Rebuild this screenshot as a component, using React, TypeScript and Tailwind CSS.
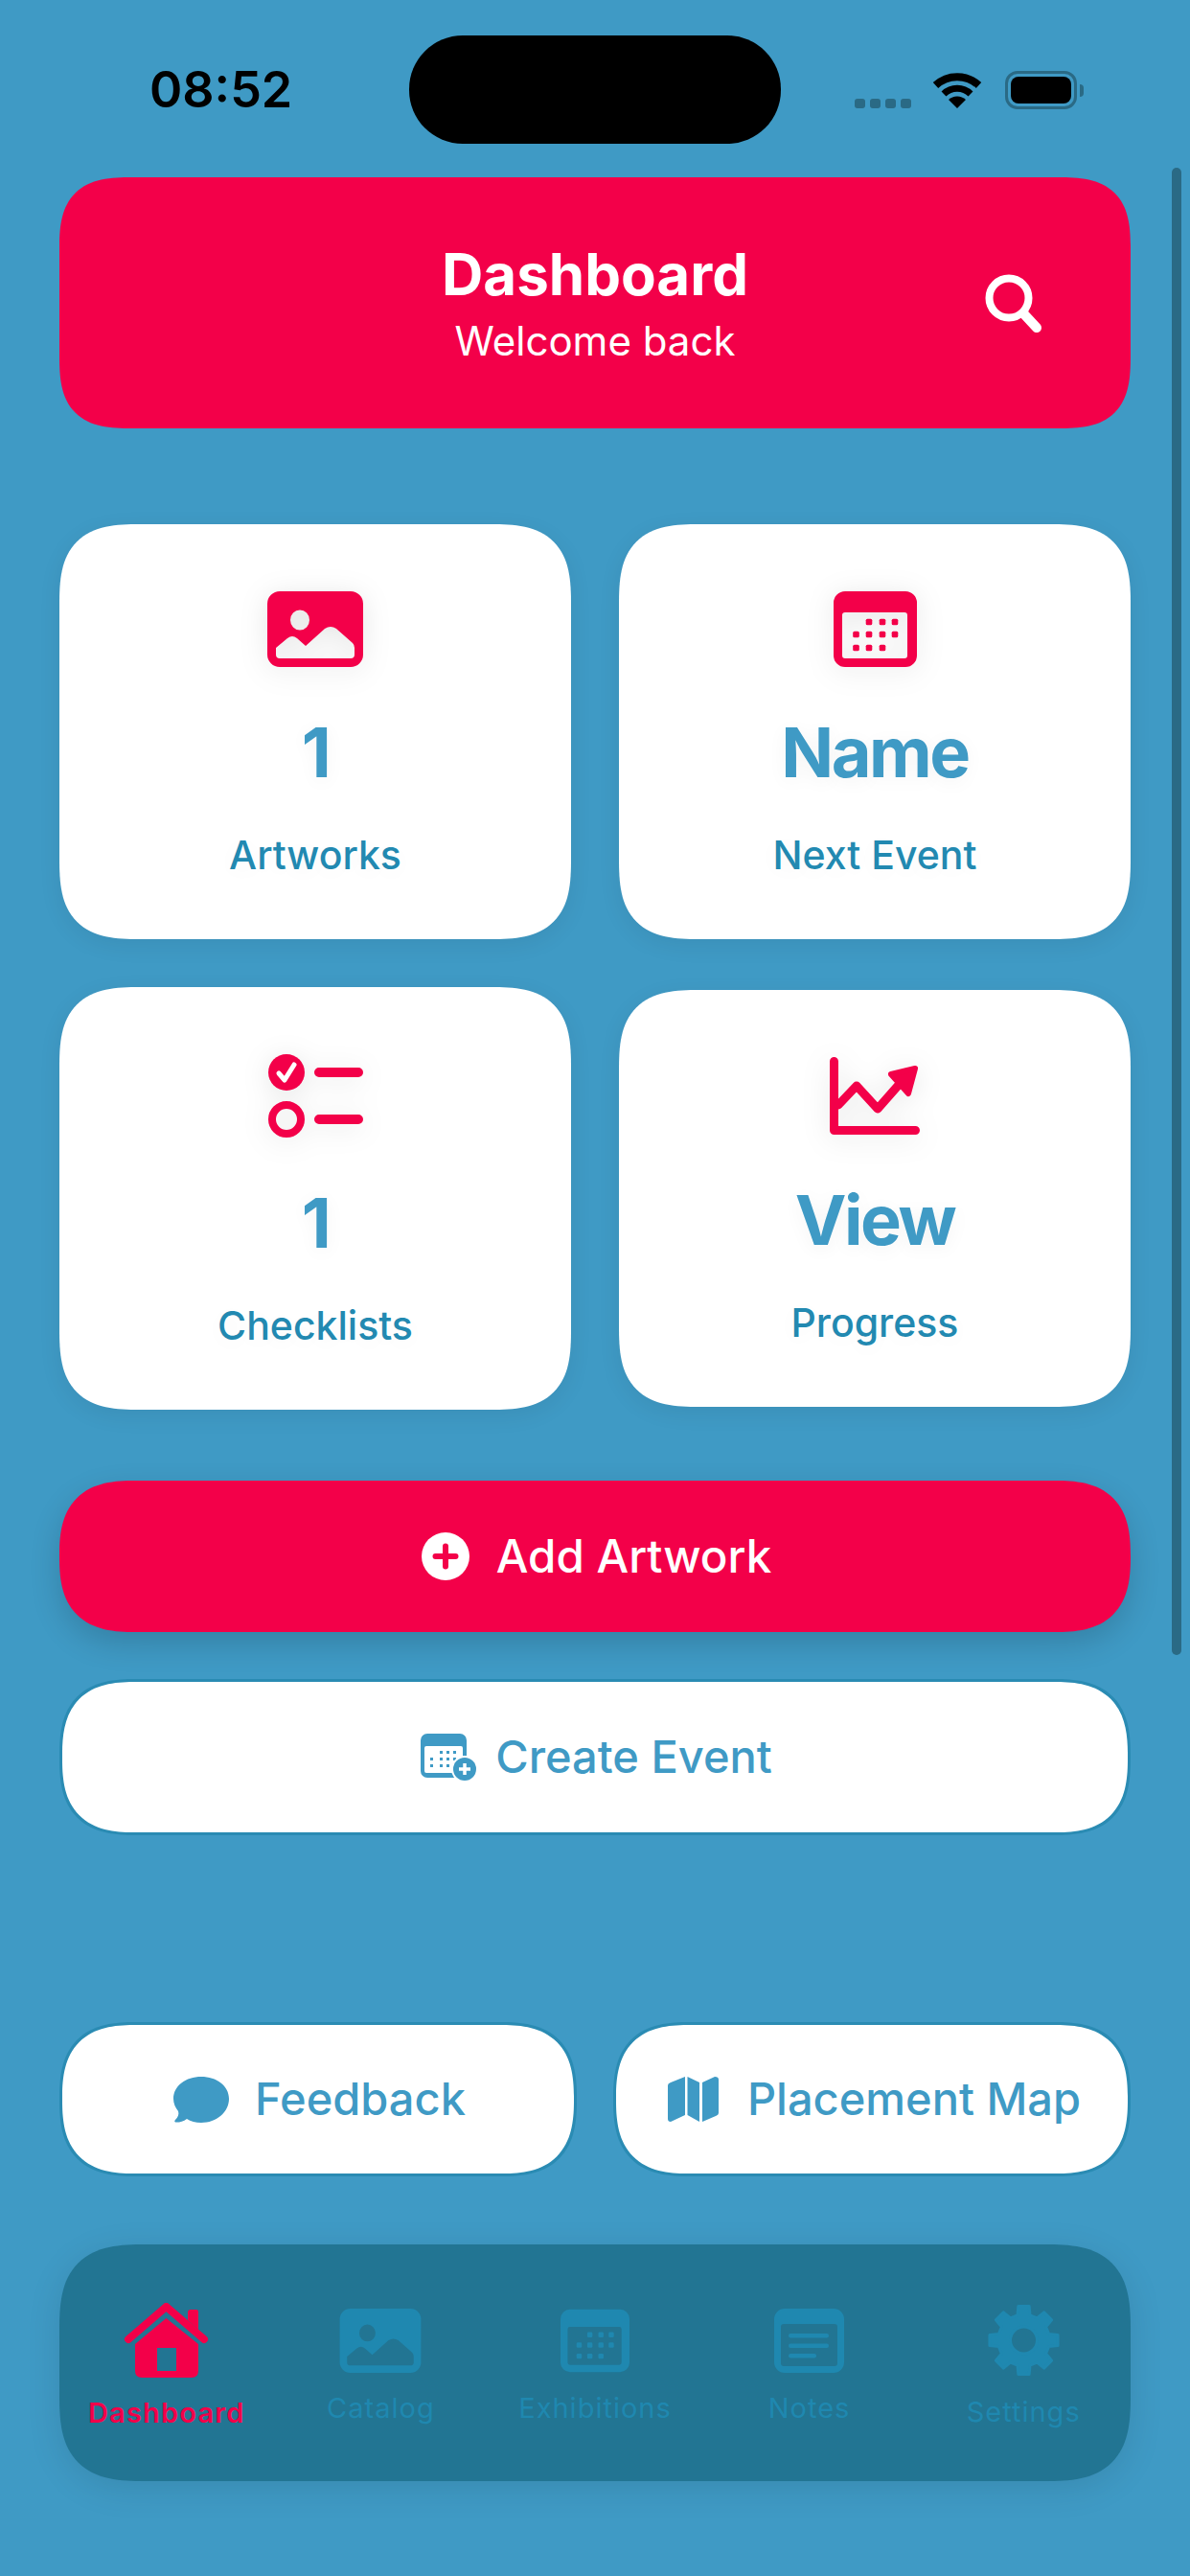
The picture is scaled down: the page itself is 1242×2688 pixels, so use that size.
import type { ReactNode } from "react";

const RoundRect = "M13 0H87A13 13 0 0 1 100 13V66A13 13 0 0 1 87 79H13A13 13 0 0 1 0 66V13A13 13 0 0 1 13 0Z";

function ImageIcon({ className }: { className: string }) {
  return (
    <svg viewBox="0 0 100 79" className={className} fill="currentColor">
      <path
        fillRule="evenodd"
        d={
          RoundRect +
          "M34 19.5a10 10.5 0 1 0 0 21a10 10.5 0 1 0 0 -21Z" +
          "M9 59L21 49Q26 45 31 49L40 57L60 39Q66 35 72 39L89 54Q91 56 91 59V66Q91 70 87 70H13Q9 70 9 66Z"
        }
      />
    </svg>
  );
}

function CalendarIcon({ className }: { className: string }) {
  const dots = [
    [37, 32], [51, 32], [64, 32],
    [23.5, 45], [37, 45], [51, 45], [64, 45],
    [23.5, 59], [37, 59], [51, 59],
  ];
  return (
    <svg viewBox="0 0 87 79" className={className} fill="currentColor">
      <path
        fillRule="evenodd"
        d="M12 0H75A12 12 0 0 1 87 12V67A12 12 0 0 1 75 79H12A12 12 0 0 1 0 67V12A12 12 0 0 1 12 0ZM12 22Q9 22 9 25V67Q9 70 12 70H74Q77 70 77 67V25Q77 22 74 22Z"
      />
      {dots.map(([x, y]) => (
        <rect key={`${x}-${y}`} x={x - 3.3} y={y - 3.3} width="6.6" height="6.6" rx="1.6" />
      ))}
    </svg>
  );
}

function ChecklistIcon({ className }: { className: string }) {
  return (
    <svg viewBox="0 0 99 87" className={className} fill="none">
      <circle cx="19" cy="19" r="19" fill="currentColor" />
      <path d="M11 20L17 27L27 11" stroke="#fff" strokeWidth="5" strokeLinecap="round" strokeLinejoin="round" />
      <circle cx="19" cy="68" r="15" stroke="currentColor" strokeWidth="8" />
      <path d="M53 19H94M53 68H94" stroke="currentColor" strokeWidth="10" strokeLinecap="round" />
    </svg>
  );
}

function ChartIcon({ className }: { className: string }) {
  return (
    <svg viewBox="0 0 94 81" className={className} fill="none" stroke="currentColor" strokeLinecap="round" strokeLinejoin="round">
      <path d="M4.5 4.5V76.5H89.5" strokeWidth="9" />
      <path d="M9 50L28 30L50 54L72 29" strokeWidth="9" />
      <path d="M89 12L64 18L82 38Z" fill="currentColor" strokeWidth="6" />
    </svg>
  );
}

function HouseIcon({ className }: { className: string }) {
  return (
    <svg viewBox="0 0 89 78" className={className} fill="currentColor">
      <path d="M5 38L44.5 4L84 38" fill="none" stroke="currentColor" strokeWidth="8" strokeLinecap="round" strokeLinejoin="round" />
      <path d="M67 10Q67 7 70 7H76Q78 7 78 10V28L67 18Z" />
      <path
        fillRule="evenodd"
        d="M44.5 16L78 43V71Q78 78 71 78H19Q12 78 12 71V43ZM35 47V71H55V47Z"
      />
    </svg>
  );
}

function NotesIcon({ className }: { className: string }) {
  return (
    <svg viewBox="0 0 73 67" className={className} fill="currentColor">
      <path
        fillRule="evenodd"
        d="M11 0H62A11 11 0 0 1 73 11V56A11 11 0 0 1 62 67H11A11 11 0 0 1 0 56V11A11 11 0 0 1 11 0ZM10 16Q7 16 7 19V57Q7 60 10 60H63Q66 60 66 57V19Q66 16 63 16Z"
      />
      <rect x="15" y="26" width="42" height="4.5" rx="2.2" />
      <rect x="15" y="36.5" width="42" height="4.5" rx="2.2" />
      <rect x="15" y="47" width="29" height="4.5" rx="2.2" />
    </svg>
  );
}

function gearPath() {
  const pt = (deg: number, r: number) => {
    const a = (deg * Math.PI) / 180;
    return `${(38.5 + r * Math.cos(a)).toFixed(2)} ${(38 + r * Math.sin(a)).toFixed(2)}`;
  };
  let d = "";
  for (let k = 0; k < 8; k++) {
    const a = k * 45 + 0;
    d += `${k === 0 ? "M" : "L"}${pt(a - 14, 27)}L${pt(a - 9, 36)}L${pt(a + 9, 36)}L${pt(a + 14, 27)}`;
  }
  return d + "ZM38.5 24a14 14 0 1 0 0 28a14 14 0 1 0 0 -28Z";
}

function GearIcon({ className }: { className: string }) {
  return (
    <svg viewBox="0 0 77 76" className={className}>
      <path d={gearPath()} fill="currentColor" stroke="currentColor" strokeWidth="3" strokeLinejoin="round" fillRule="evenodd" />
    </svg>
  );
}

function StatCard({ icon, value, label }: { icon: ReactNode; value: string; label: string }) {
  return (
    <div className="flex flex-col items-center rounded-[84px] bg-white pt-[70px] pb-[63px] shadow-[0_6px_24px_rgba(0,0,0,0.07)] [corner-shape:superellipse(1.5)]">
      {icon}
      <div className="mt-[44px] text-[72px] leading-[90px] font-bold tracking-[-2.5px] text-[#3f9ac5] [text-shadow:0_4px_20px_rgba(0,0,0,0.05)]">
        {value}
      </div>
      <div className="mt-[37px] text-[41px] leading-[50px] font-medium text-[#2289b1] [text-shadow:0_4px_20px_rgba(0,0,0,0.04)]">
        {label}
      </div>
    </div>
  );
}

function NavItem({ icon, label, active }: { icon: ReactNode; label: string; active?: boolean }) {
  return (
    <div className={`flex flex-col items-center ${active ? "text-[#f30049]" : "text-[#1f88b0]"}`}>
      {icon}
      <span
        className={`mt-[19px] text-[29px] leading-[36px] ${active ? "font-semibold tracking-[1.2px]" : "font-normal tracking-[1px]"}`}
      >
        {label}
      </span>
    </div>
  );
}

function OutlineButton({ icon, label, className }: { icon: ReactNode; label: string; className: string }) {
  return (
    <button className={`flex items-center justify-center rounded-[80px] border-[3px] border-[#2a8bb3] bg-white text-[47px] font-medium text-[#3f9ac5] [corner-shape:superellipse(1.4)] ${className}`}>
      {icon}
      {label}
    </button>
  );
}

const iconShadow = "drop-shadow-[0_4px_14px_rgba(0,0,0,0.1)]";

export default function App() {
  return (
    <div className="relative flex h-[2688px] w-[1242px] flex-col overflow-hidden bg-[#3f9ac5] font-[family-name:Inter,sans-serif]">
      {/* status bar */}
      <div className="grid h-[185px] grid-cols-[427px_388px_1fr]">
        <div className="pt-[64px] pl-[156px] text-[52px] leading-[60px] font-semibold text-black">08:52</div>
        <div className="mt-[37px] h-[113px] rounded-[56px] bg-black" />
        <div className="flex items-start pt-[74px] pl-[77px]">
          <div className="mt-[29px] flex gap-[5px]">
            <span className="h-[10px] w-[11px] rounded-[3px] bg-[#2a6a85]" />
            <span className="h-[10px] w-[11px] rounded-[3px] bg-[#2a6a85]" />
            <span className="h-[10px] w-[11px] rounded-[3px] bg-[#2a6a85]" />
            <span className="h-[10px] w-[11px] rounded-[3px] bg-[#2a6a85]" />
          </div>
          <svg viewBox="0 0 52 38" className="mt-[1px] ml-[22px] h-[38px] w-[52px]" fill="none" stroke="#000">
            <path d="M3.5 14A33 33 0 0 1 48.500 14" strokeWidth="8" />
            <path d="M12 23A20 20 0 0 1 40 23" strokeWidth="7" />
            <path d="M26 38L17 29A13 13 0 0 1 35 29Z" fill="#000" stroke="none" />
          </svg>
          <div className="ml-[24px] flex items-center">
            <div className="h-[40px] w-[75px] rounded-[13px] border-[3px] border-[#2a6a85] p-[3px]">
              <div className="h-full w-full rounded-[8px] bg-black" />
            </div>
            <div className="ml-[3px] h-[13px] w-[4px] rounded-r-full bg-[#2a6a85]" />
          </div>
        </div>
      </div>

      <div className="flex flex-col px-[62px]">
        {/* header */}
        <div className="grid h-[262px] grid-cols-[1fr_auto_1fr] items-center rounded-[76px] bg-[#f30049] [corner-shape:superellipse(1.5)]">
          <div />
          <div className="flex flex-col items-center text-white">
            <div className="text-[60px] leading-[70px] font-bold">Dashboard</div>
            <div className="mt-[10px] text-[42px] leading-[50px] font-normal">Welcome back</div>
          </div>
          <svg viewBox="0 0 59 61" className="mr-[93px] h-[61px] w-[59px] justify-self-end" fill="none" stroke="#fff" strokeLinecap="round">
            <circle cx="25" cy="25" r="20.500" strokeWidth="8" />
            <path d="M41 42L54 56" strokeWidth="10" />
          </svg>
        </div>

        {/* stats */}
        <div className="mt-[100px] grid grid-cols-2 gap-x-[50px]">
          <StatCard
            icon={<ImageIcon className={`h-[79px] w-[100px] text-[#f30049] ${iconShadow}`} />}
            value="1"
            label="Artworks"
          />
          <StatCard
            icon={<CalendarIcon className={`h-[79px] w-[87px] text-[#f30049] ${iconShadow}`} />}
            value="Name"
            label="Next Event"
          />
        </div>
        <div className="mt-[50px] grid grid-cols-2 items-center gap-x-[50px]">
          <StatCard
            icon={<ChecklistIcon className={`h-[87px] w-[99px] text-[#f30049] ${iconShadow}`} />}
            value="1"
            label="Checklists"
          />
          <StatCard
            icon={<ChartIcon className={`h-[81px] w-[94px] text-[#f30049] ${iconShadow}`} />}
            value="View"
            label="Progress"
          />
        </div>

        {/* actions */}
        <button className="mt-[74px] flex h-[158px] items-center justify-center rounded-[79px] bg-[#f30049] pl-[3px] text-[47.5px] font-medium text-white shadow-[0_12px_32px_rgba(0,0,0,0.16)] [corner-shape:superellipse(1.4)]">
          <svg viewBox="0 0 50 50" className="mr-[28px] h-[50px] w-[50px]">
            <circle cx="25" cy="25" r="25" fill="#fff" />
            <path d="M25 14.500V35.500M14.500 25H35.500" stroke="#f30049" strokeWidth="6" strokeLinecap="round" />
          </svg>
          Add Artwork
        </button>
        <OutlineButton
          className="mt-[49px] h-[163px] pl-[3px]"
          label="Create Event"
          icon={
            <svg viewBox="0 0 58 50" className="mr-[20px] h-[50px] w-[58px] text-[#3f9ac5]" fill="currentColor">
              <path
                fillRule="evenodd"
                d="M7 0H41A7 7 0 0 1 48 7V39A7 7 0 0 1 41 46H7A7 7 0 0 1 0 39V7A7 7 0 0 1 7 0ZM6 13Q4 13 4 15V39Q4 41 6 41H42Q44 41 44 39V15Q44 13 42 13Z"
              />
              <path d="M20 18h3v3h-3zM27 18h3v3h-3zM34 18h3v3h-3zM10 25h3v3h-3zM20 25h3v3h-3zM27 25h3v3h-3zM34 25h3v3h-3zM10 32h3v3h-3zM20 32h3v3h-3zM27 32h3v3h-3z" />
              <circle cx="46" cy="37" r="14" fill="#fff" />
              <circle cx="46" cy="37" r="12" />
              <path d="M46 31V43M40 37H52" stroke="#fff" strokeWidth="3.500" />
            </svg>
          }
        />

        <div className="mt-[195px] grid grid-cols-2 gap-x-[38px]">
          <OutlineButton
            className="h-[161px] pl-[3px]"
            label="Feedback"
            icon={
              <svg viewBox="0 0 58 48" className="mr-[27px] h-[48px] w-[58px]" fill="#3f9ac5">
                <path d="M29 0C45 0 58 9.500 58 23C58 37 45 48 29 48C23 48 18 46.500 14 44C10 47 5 48 2 47.500C1 47 1 46 2 45C5 42 6 39 5 36C2 32 0 28 0 23C0 9.500 13 0 29 0Z" />
              </svg>
            }
          />
          <OutlineButton
            className="h-[161px] pl-[5px]"
            label="Placement Map"
            icon={
              <svg viewBox="0 0 53 47" className="mr-[30px] h-[47px] w-[53px]" fill="#3f9ac5">
                <path d="M3 6L18 0V40L3 47Q0 47 0 44V9Q0 7 3 6Z" />
                <path d="M20.500 0L33 6V47L20.500 40Z" />
                <path d="M36 6L49 0Q53 0 53 3V38Q53 40 50 41L36 47Z" />
              </svg>
            }
          />
        </div>

        {/* tab bar */}
        <nav className="mt-[71px] grid h-[247px] grid-cols-5 items-center rounded-[90px] bg-[#227593] pt-[8px] shadow-[0_8px_36px_rgba(0,0,0,0.1)] [corner-shape:superellipse(1.5)]">
          <NavItem active label="Dashboard" icon={<HouseIcon className="h-[78px] w-[89px]" />} />
          <NavItem label="Catalog" icon={<ImageIcon className="h-[67px] w-[86px]" />} />
          <NavItem label="Exhibitions" icon={<CalendarIcon className="h-[67px] w-[72px]" />} />
          <NavItem label="Notes" icon={<NotesIcon className="h-[67px] w-[73px]" />} />
          <NavItem label="Settings" icon={<GearIcon className="h-[76px] w-[77px]" />} />
        </nav>
      </div>

      {/* scroll indicator */}
      <div className="absolute top-[175px] left-[1223px] h-[1552px] w-[10px] rounded-full bg-[#2a6a85]" />
    </div>
  );
}
